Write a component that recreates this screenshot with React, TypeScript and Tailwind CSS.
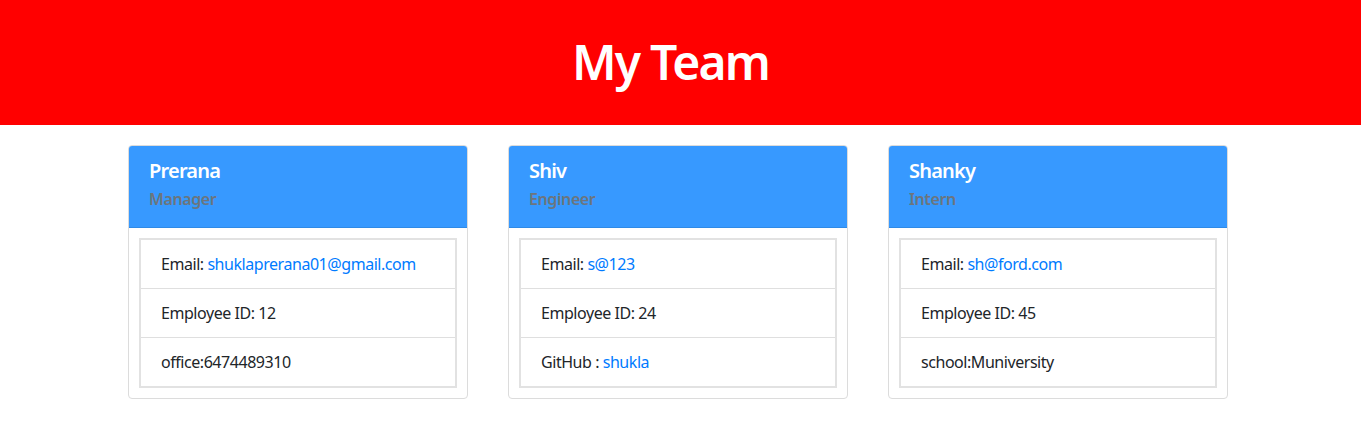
import { ReactNode } from 'react'

type Member = {
    name: string
    role: string
    email: string
    id: number
    extra: ReactNode
}

const team: Member[] = [
    {
        name: 'Prerana',
        role: 'Manager',
        email: 'shuklaprerana01@gmail.com',
        id: 12,
        extra: <>office:6474489310</>,
    },
    {
        name: 'Shiv',
        role: 'Engineer',
        email: 's@123',
        id: 24,
        extra: (
            <>
                GitHub : <a href="#" className="text-[#007bff]">shukla</a>
            </>
        ),
    },
    {
        name: 'Shanky',
        role: 'Intern',
        email: 'sh@ford.com',
        id: 45,
        extra: <>school:Muniversity</>,
    },
]

function EmployeeCard({ m }: { m: Member }) {
    return (
        <div className="w-[340px] bg-white border border-[#dcdcdc] rounded-[4px] overflow-hidden">
            {/* Card header */}
            <div className="h-[82px] bg-[#3799ff] border-b border-[#2f8ae6] px-5 pt-[13px]">
                <h2 className="text-[20px] leading-[24px] font-semibold text-white tracking-[-0.8px]">{m.name}</h2>
                <h3 className="mt-[4px] text-[16px] leading-[24px] font-semibold text-[#6c757d] tracking-[-0.4px]">{m.role}</h3>
            </div>

            {/* Card body */}
            <div className="p-[10px]">
                <ul className="border-2 border-[#e2e2e2] text-[16px] text-[#212529] tracking-[-0.45px]">
                    <li className="h-[49px] flex items-center px-5 border-b border-[#dfdfdf]">
                        Email:&nbsp;<a href="#" className="text-[#007bff]">{m.email}</a>
                    </li>
                    <li className="h-[49px] flex items-center px-5 border-b border-[#dfdfdf]">
                        Employee ID: {m.id}
                    </li>
                    <li className="h-[48px] flex items-center px-5 whitespace-pre">
                        {m.extra}
                    </li>
                </ul>
            </div>
        </div>
    )
}

export default function App() {
    return (
        <div className="min-h-screen bg-white font-['Noto_Sans','Open_Sans',sans-serif]">
            {/* Banner */}
            <header className="h-[125px] bg-[#ff0000] flex items-center justify-center pr-[20px]">
                <h1 className="text-[48px] font-semibold text-white leading-none pb-[2px] tracking-[-1.8px]">My Team</h1>
            </header>

            {/* Team cards */}
            <main className="flex justify-center gap-10 pt-5 pr-[5px]">
                {team.map((m) => (
                    <EmployeeCard key={m.name} m={m} />
                ))}
            </main>
        </div>
    )
}
